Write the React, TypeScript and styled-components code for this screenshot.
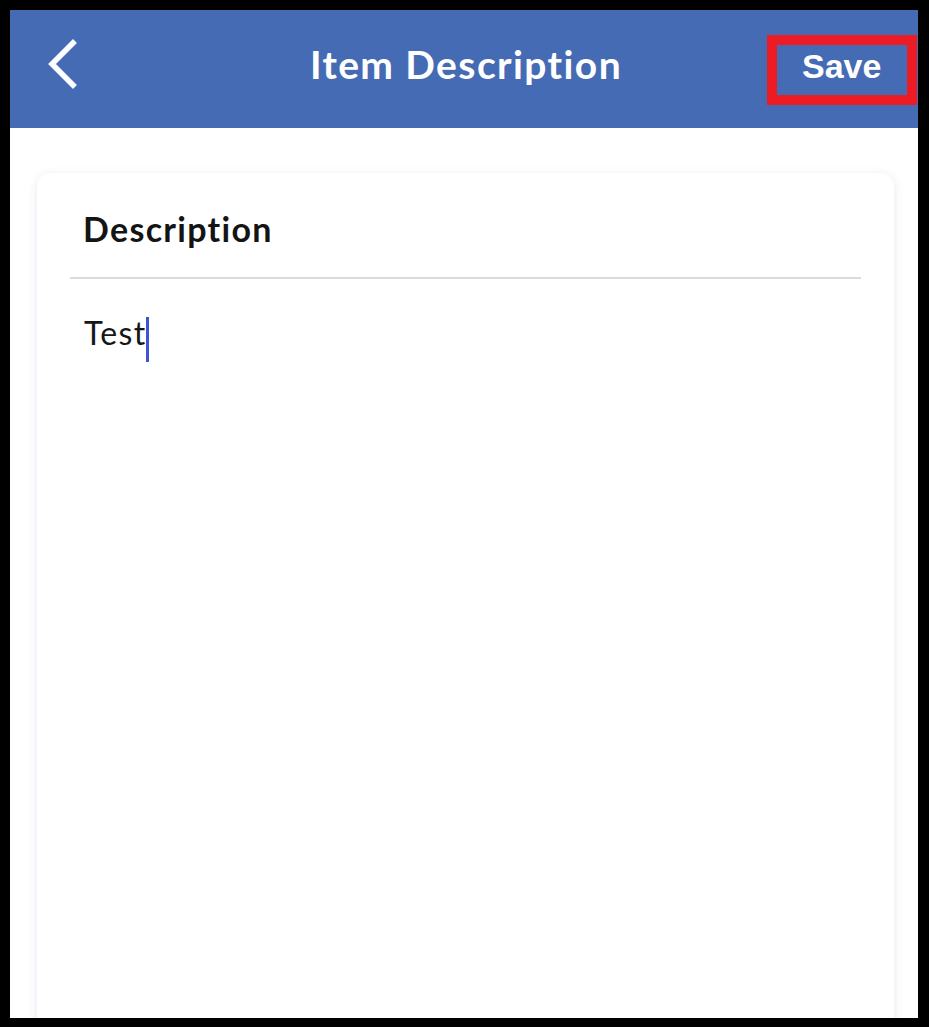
import React from "react";
import styled, { createGlobalStyle } from "styled-components";

const GlobalStyle = createGlobalStyle`
  html, body {
    margin: 0;
    padding: 0;
    background: #000000;
  }
  body {
    font-family: Lato, "Open Sans", sans-serif;
  }
`;

const App = () => {
  return (
    <>
      <GlobalStyle />
      <Frame>
        <Header>
          <BackButton aria-label="Back">
            <svg width="30" height="50" viewBox="0 0 30 50">
              <path
                d="M26 4 L5 25 L26 46"
                fill="none"
                stroke="#ffffff"
                strokeWidth="5.5"
                strokeLinecap="square"
              />
            </svg>
          </BackButton>
          <Title>Item Description</Title>
          <SaveButton>Save</SaveButton>
        </Header>

        <Content>
          <Card>
            <CardHeader>
              <Label>Description</Label>
            </CardHeader>
            <Divider />
            <Editor>
              Test
              <Caret />
            </Editor>
          </Card>
        </Content>
      </Frame>
    </>
  );
};

export default App;

const Frame = styled.div`
  margin: 10px 0 0 10px;
  width: 908px;
  height: 1008px;
  overflow: hidden;
  background: #ffffff;
  display: flex;
  flex-direction: column;
`;

const Header = styled.header`
  flex: none;
  height: 118px;
  background: #466bb5;
  display: grid;
  grid-template-columns: 1fr auto 1fr;
  align-items: center;
  padding: 0 1px;
  box-sizing: border-box;
`;

const BackButton = styled.button`
  justify-self: start;
  margin: -10px 0 0 36px;
  background: none;
  border: none;
  padding: 0;
  display: flex;
  cursor: pointer;
`;

const Title = styled.h1`
  margin: -10px 0 0 4px;
  font-family: Lato, sans-serif;
  font-weight: 700;
  font-size: 39px;
  color: #ffffff;
  letter-spacing: 1.4px;
`;

const SaveButton = styled.button`
  justify-self: end;
  align-self: start;
  width: 150px;
  height: 70px;
  margin-top: 25px;
  box-sizing: border-box;
  border: 10px solid #ed1c24;
  background: transparent;
  color: #ffffff;
  font-family: "Liberation Sans", Arial, sans-serif;
  font-weight: 700;
  font-size: 34px;
  line-height: 1;
  padding: 0 0 8px 25px;
  text-align: left;
  cursor: pointer;
`;

const Content = styled.main`
  flex: 1;
  padding: 45px 24px 0 27px;
`;

const Card = styled.section`
  height: 960px;
  background: #ffffff;
  border-radius: 14px;
  box-shadow: 0 2px 10px rgba(110, 90, 150, 0.16);
`;

const CardHeader = styled.div`
  height: 104px;
  box-sizing: border-box;
  padding: 6px 46px 0;
  display: flex;
  align-items: center;
`;

const Label = styled.h2`
  margin: 0;
  font-family: Lato, sans-serif;
  font-weight: 700;
  font-size: 34px;
  color: #141414;
  letter-spacing: 1.3px;
`;

const Divider = styled.hr`
  margin: 0 33px;
  height: 2px;
  border: none;
  background: #dadae0;
`;

const Editor = styled.div`
  padding: 32px 46px 0 47px;
  font-family: Lato, sans-serif;
  font-size: 32px;
  line-height: 44px;
  color: #161616;
  letter-spacing: 1.3px;
`;

const Caret = styled.span`
  display: inline-block;
  width: 3px;
  height: 45px;
  margin-left: 0;
  background: #3f55d0;
  vertical-align: -17px;
`;
